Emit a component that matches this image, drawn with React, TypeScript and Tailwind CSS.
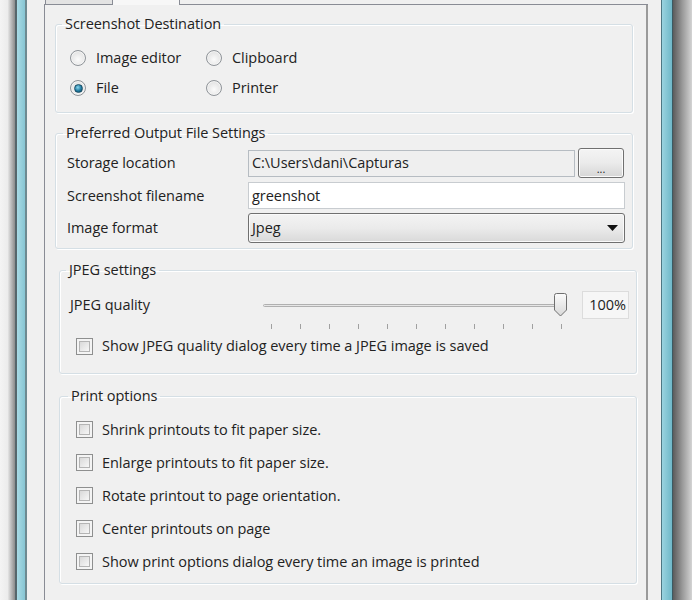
import type { ReactNode } from "react";

const FONT = { fontFamily: '"Open Sans", "Noto Sans", "Liberation Sans", sans-serif' };

function Radio({ checked, label }: { checked?: boolean; label: string }) {
    return (
        <div className="flex h-[30px] items-center">
            <span className="flex h-[16px] w-[16px] items-center justify-center rounded-full border border-[#8f9499] bg-[radial-gradient(circle_at_50%_60%,#fbfbfb,#d9d9d9)] shadow-[inset_0_0_0_1px_#f4f4f4]">
                {checked && (
                    <span className="h-[9px] w-[9px] rounded-full border border-[#1b4f66] bg-[radial-gradient(circle_at_40%_35%,#8ad6ee,#1f7aa0_55%,#0b3f58)]" />
                )}
            </span>
            <span className="ml-[10px]">{label}</span>
        </div>
    );
}

function Box() {
    return (
        <span className="flex h-[17px] w-[17px] shrink-0 items-center justify-center border border-[#8e8f8f] bg-[#f4f4f4]">
            <span className="h-[11px] w-[11px] border border-[#b4b4b4] bg-gradient-to-br from-[#d9d9d9] to-[#f7f7f7]" />
        </span>
    );
}

function Check({ label }: { label: string }) {
    return (
        <div className="flex h-[33px] items-center">
            <Box />
            <span className="ml-[9px]">{label}</span>
        </div>
    );
}

function Group({ title, children, className, legend }: { title: string; children: ReactNode; className: string; legend: string }) {
    return (
        <fieldset className={`w-[578px] rounded-[3px] border border-[#d5dfe5] shadow-[inset_1px_1px_0_#ffffff,1px_1px_0_#ffffff] ${className}`}>
            <legend className={`px-[3px] leading-[20px] ${legend}`}>{title}</legend>
            {children}
        </fieldset>
    );
}

const TICKS = [0, 1, 2, 3, 4, 5, 6, 7, 8, 9, 10];

export default function App() {
    return (
        <div className="flex h-[600px] w-[692px] overflow-hidden text-[14.5px] tracking-[-0.05px] text-[#222222]" style={FONT}>
            {/* left window frame */}
            <div className="w-[15px] bg-gradient-to-r from-[#f4f4f4] via-[#ececec] to-[#8c8c8c]" />
            <div className="w-[2px] bg-[#56666b]" />
            <div className="w-[8px] bg-gradient-to-r from-[#a9dbe5] to-[#86c5d3]" />
            <div className="w-[2px] bg-[#6d8a91]" />

            {/* dialog body */}
            <div className="w-[634px] bg-[#f0f0f0] pl-[17px]">
                <div className="w-[604px]">
                    {/* tab strip, cut at the top */}
                    <div className="flex h-[5px]">
                        <div className="w-[1px] border-b border-[#898c95]" />
                        <div className="w-[68px] border-x border-b border-[#898c95] bg-[#e3e3e3]" />
                        <div className="w-[67px] border-r border-[#898c95] bg-[#f7f7f7]" />
                        <div className="flex-1 border-b border-[#898c95]" />
                    </div>

                    {/* tab page */}
                    <div className="h-[595px] border-l border-r-2 border-l-[#898c95] border-r-[#9a9a9a] bg-[#f0f0f0] pt-[9px]">
                        <Group title="Screenshot Destination" legend="-ml-[8px]" className="ml-[10px] px-[14px] pb-[9px] pt-[9px]">
                            <div className="grid grid-cols-[136px_1fr]">
                                <Radio label="Image editor" />
                                <Radio label="Clipboard" />
                                <Radio checked label="File" />
                                <Radio label="Printer" />
                            </div>
                        </Group>

                        <Group title="Preferred Output File Settings" legend="-ml-[4px]" className="ml-[10px] mt-[10px] pb-[5px] pl-[11px] pr-[7px] pt-[5px]">
                            <div className="flex flex-col gap-[4px]">
                                <div className="flex h-[30px] items-center">
                                    <span className="w-[181px]">Storage location</span>
                                    <div className="flex h-[27px] w-[327px] items-center border border-[#b6bcc2] bg-[#efefef] pl-[3px]">
                                        C:\Users\dani\Capturas
                                    </div>
                                    <div className="ml-[3px] flex h-[30px] w-[46px] items-end justify-center rounded-[3px] border border-[#707070] bg-gradient-to-b from-[#f4f4f4] via-[#ebebeb] to-[#d6d6d6] pb-[3px] text-[11px] leading-none shadow-[inset_0_0_0_1px_#fbfbfb]">
                                        ...
                                    </div>
                                </div>
                                <div className="flex h-[27px] items-center">
                                    <span className="w-[181px]">Screenshot filename</span>
                                    <div className="flex h-[27px] w-[377px] items-center border border-[#c8ccd0] bg-white pl-[3px]">
                                        greenshot
                                    </div>
                                </div>
                                <div className="flex h-[30px] items-center">
                                    <span className="w-[181px]">Image format</span>
                                    <div className="flex h-[30px] w-[377px] items-center justify-between rounded-[3px] border border-[#707070] bg-gradient-to-b from-[#f3f3f3] via-[#ebebeb] to-[#d9d9d9] pl-[3px] pr-[6px] shadow-[inset_0_0_0_1px_#fafafa]">
                                        <span>Jpeg</span>
                                        <svg width="11" height="6" viewBox="0 0 11 6">
                                            <path d="M0 0h11L5.5 6z" fill="#111111" />
                                        </svg>
                                    </div>
                                </div>
                            </div>
                        </Group>

                        <Group title="JPEG settings" legend="-ml-[4px]" className="ml-[14px] mt-[11px] pb-[18px] pl-[10px] pr-[7px] pt-[10px]">
                            <div className="flex h-[29px] items-center">
                                <span className="w-[193px]">JPEG quality</span>
                                <div className="relative h-[29px] w-[307px]">
                                    <div className="absolute left-0 top-[14px] h-[3px] w-[300px] rounded-full border border-[#b0b0b0] bg-[#e6e6e6]" />
                                    <div className="absolute left-[290px] top-[3px] h-[24px] w-[15px]">
                                        <svg width="15" height="24" viewBox="0 0 15 24">
                                            <defs>
                                                <linearGradient id="thumb" x1="0" y1="0" x2="0" y2="1">
                                                    <stop offset="0" stopColor="#fbfbfb" />
                                                    <stop offset="1" stopColor="#d8d8d8" />
                                                </linearGradient>
                                            </defs>
                                            <path d="M1.5 2.5 Q1.5 0.5 3.5 0.5 H11.5 Q13.5 0.5 13.5 2.5 V17 L7.5 23 L1.5 17 Z" fill="url(#thumb)" stroke="#6f6f6f" />
                                        </svg>
                                    </div>
                                </div>
                                <div className="ml-[12px] flex h-[28px] w-[47px] items-center justify-end border border-[#dcdcdc] bg-[#f6f6f6] pr-[2px]">
                                    100%
                                </div>
                            </div>
                            <div className="mt-[4px] flex h-[6px] items-center pl-[201px]">
                                {TICKS.map((t) => (
                                    <span key={t} className="mr-[28px] h-[5px] w-[1px] bg-[#a0a0a0]" />
                                ))}
                            </div>
                            <div className="mt-[8px] flex h-[18px] items-center pl-[6px]">
                                <Box />
                                <span className="ml-[9px]">Show JPEG quality dialog every time a JPEG image is saved</span>
                            </div>
                        </Group>

                        <Group title="Print options" legend="-ml-[8px]" className="ml-[14px] mt-[12px] pb-[5px] pl-[16px] pt-[7px]">
                            <Check label="Shrink printouts to fit paper size." />
                            <Check label="Enlarge printouts to fit paper size." />
                            <Check label="Rotate printout to page orientation." />
                            <Check label="Center printouts on page" />
                            <Check label="Show print options dialog every time an image is printed" />
                        </Group>
                    </div>
                </div>
            </div>

            {/* right window frame */}
            <div className="w-[1px] bg-[#4e7783]" />
            <div className="w-[10px] bg-gradient-to-r from-[#9ad3df] to-[#6fb8c8]" />
            <div className="w-[1px] bg-[#3c5961]" />
            <div className="w-[19px] bg-gradient-to-r from-[#5c5c5c] via-[#9a9a9a] to-[#d4d4d4]" />
        </div>
    );
}
